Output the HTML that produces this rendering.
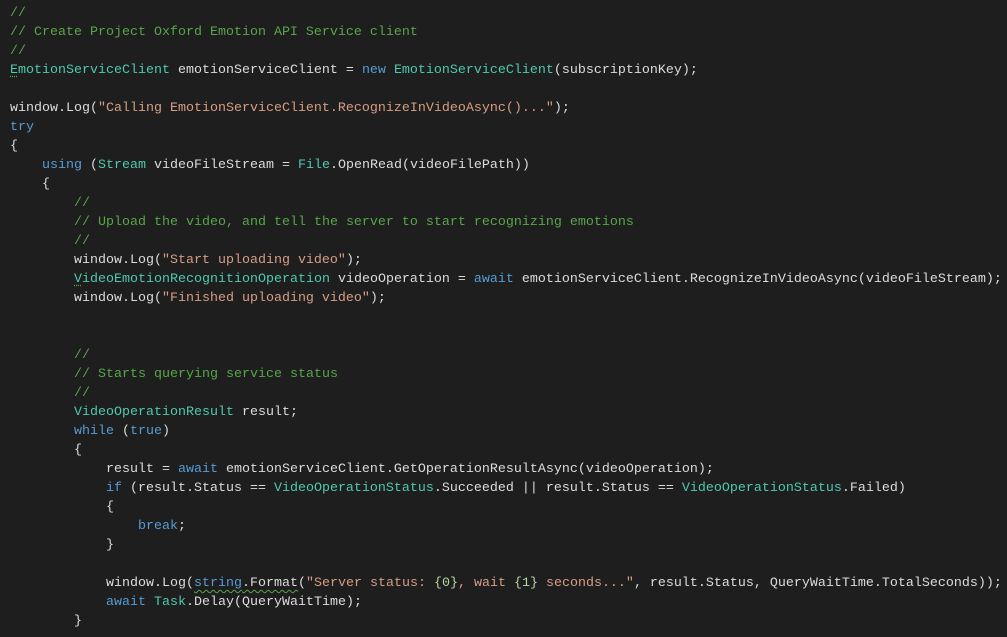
<!DOCTYPE html>
<html><head><meta charset="utf-8"><style>
html,body{margin:0;padding:0;background:#1e1e1e;width:1007px;height:637px;overflow:hidden}
pre{margin:0;padding:4px 0 0 10px;font-family:"Liberation Mono",monospace;font-size:13.33px;line-height:19px;color:#dcdcdc}
.c{color:#57a64a}.k{color:#569cd6}.t{color:#4ec9b0}.s{color:#d69d85}.f{color:#b8d7a3}
.d{text-decoration:underline dotted #57a64a;text-underline-offset:3px}
.w{text-decoration:underline wavy #57a64a;text-underline-offset:3px;text-decoration-thickness:1px}
</style></head><body><pre><span class="c">//</span>
<span class="c">// Create Project Oxford Emotion API Service client</span>
<span class="c">//</span>
<span class="t"><span class="d">E</span>motionServiceClient</span> emotionServiceClient = <span class="k">new</span> <span class="t">EmotionServiceClient</span>(subscriptionKey);

window.Log(<span class="s">"Calling EmotionServiceClient.RecognizeInVideoAsync()..."</span>);
<span class="k">try</span>
{
    <span class="k">using</span> (<span class="t">Stream</span> videoFileStream = <span class="t">File</span>.OpenRead(videoFilePath))
    {
        <span class="c">//</span>
        <span class="c">// Upload the video, and tell the server to start recognizing emotions</span>
        <span class="c">//</span>
        window.Log(<span class="s">"Start uploading video"</span>);
        <span class="t"><span class="d">V</span>ideoEmotionRecognitionOperation</span> videoOperation = <span class="k">await</span> emotionServiceClient.RecognizeInVideoAsync(videoFileStream);
        window.Log(<span class="s">"Finished uploading video"</span>);


        <span class="c">//</span>
        <span class="c">// Starts querying service status</span>
        <span class="c">//</span>
        <span class="t">VideoOperationResult</span> result;
        <span class="k">while</span> (<span class="k">true</span>)
        {
            result = <span class="k">await</span> emotionServiceClient.GetOperationResultAsync(videoOperation);
            <span class="k">if</span> (result.Status == <span class="t">VideoOperationStatus</span>.Succeeded || result.Status == <span class="t">VideoOperationStatus</span>.Failed)
            {
                <span class="k">break</span>;
            }

            window.Log(<span class="w"><span class="k">string</span>.Format</span>(<span class="s">"Server status: </span><span class="f">{0}</span><span class="s">, wait </span><span class="f">{1}</span><span class="s"> seconds..."</span>, result.Status, QueryWaitTime.TotalSeconds));
            <span class="k">await</span> <span class="t">Task</span>.Delay(QueryWaitTime);
        }
</pre></body></html>
